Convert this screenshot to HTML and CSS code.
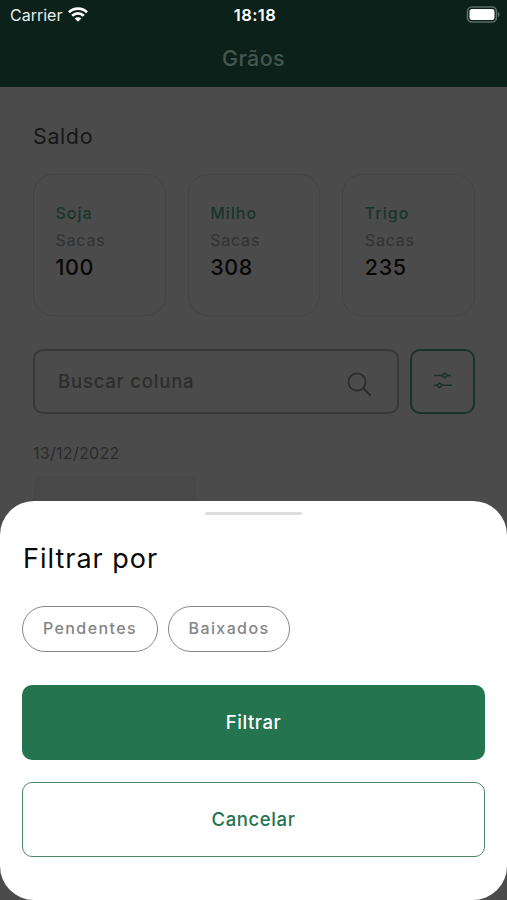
FILE: index.html
```html
<!DOCTYPE html>
<html lang="pt-BR">
<head>
  <meta charset="UTF-8" />
  <title>Grãos</title>
  <meta name="viewport" content="width=device-width, initial-scale=1" />
  <link rel="stylesheet" href="styles.css">
</head>
<body>

  <header class="header">
    <div class="status">
      <div class="carrier">
        <span>Carrier</span>
        <svg width="20" height="15" viewBox="0 0 20 15" fill="none" stroke="#fff" stroke-width="2.7">
          <path d="M1 5.4a12.8 12.8 0 0 1 18 0" />
          <path d="M4.2 8.8a8.2 8.2 0 0 1 11.6 0" />
          <path d="M10 14.8 6.7 11.5a4.7 4.7 0 0 1 6.6 0z" fill="#fff" stroke="none" />
        </svg>
      </div>
      <span class="time">18:18</span>
      <svg class="battery" width="34" height="17" viewBox="0 0 34 17">
        <rect x="1.500" y="1" width="29" height="15" rx="4.5" fill="none" stroke="#5c6d66" stroke-width="1.6" />
        <rect x="3.500" y="3" width="25" height="11" rx="2.8" fill="#fff" />
        <path d="M32 6v5q1.6-.8 1.6-2.5T32 6z" fill="#5c6d66" />
      </svg>
    </div>
    <h1 class="title">Grãos</h1>
  </header>

  <main class="content">
    <h2 class="saldo">Saldo</h2>

    <div class="cards">
      <div class="card">
        <p class="name">Soja</p>
        <p class="unit">Sacas</p>
        <p class="amount">100</p>
      </div>
      <div class="card">
        <p class="name">Milho</p>
        <p class="unit">Sacas</p>
        <p class="amount">308</p>
      </div>
      <div class="card">
        <p class="name">Trigo</p>
        <p class="unit">Sacas</p>
        <p class="amount">235</p>
      </div>
    </div>

    <div class="search-row">
      <div class="search">
        <span>Buscar coluna</span>
        <svg width="25" height="25" viewBox="0 0 25 25" fill="none" stroke="#2b2b2b" stroke-width="1.6">
          <circle cx="10" cy="10" r="8.6" />
          <path d="M16 16l7.5 7.5" stroke-width="1.9" />
        </svg>
      </div>
      <div class="filter">
        <svg width="18" height="17" viewBox="0 0 18 17" fill="none" stroke="#1a3129" stroke-width="1.4">
          <path d="M0 3.5h8.2M13.4 3.5H17M0 13.2h3M8 13.2h10" />
          <path d="M10.8 1l2.5 2.500-2.500 2.500-2.500-2.500zM5.500 10.700l2.500 2.500-2.500 2.500-2.500-2.500z" stroke-linejoin="round" />
        </svg>
      </div>
    </div>

    <p class="date">13/12/2022</p>
    <div class="entry">
      <div class="entry-left"></div>
      <div class="entry-right"></div>
    </div>
  </main>

  <section class="sheet">
    <div class="handle"></div>
    <h2 class="sheet-title">Filtrar por</h2>
    <div class="chips">
      <button class="chip chip-pendentes">Pendentes</button>
      <button class="chip chip-baixados">Baixados</button>
    </div>
    <button class="btn btn-primary">Filtrar</button>
    <button class="btn btn-outline">Cancelar</button>
  </section>

</body>
</html>
```

FILE: styles.css
```css
* {
  box-sizing: border-box;
}
body {
  margin: 0;
  height: 900px;
  overflow: hidden;
  position: relative;
  background: #4b4b4b;
  font-family: Inter, "Liberation Sans", sans-serif;
}
h1, h2, p {
  margin: 0;
  font-weight: 400;
}
button {
  font-family: inherit;
  padding: 0;
}

/* header */
.header {
  height: 87px;
  background: #0b2119;
}
.status {
  height: 30px;
  padding: 0 7px 0 10px;
  display: grid;
  grid-template-columns: 1fr auto 1fr;
  align-items: center;
  color: #fff;
  font-size: 16.5px;
}
.carrier {
  display: flex;
  align-items: center;
  gap: 6px;
  color: #e9edeb;
  font-size: 16px;
}
.carrier svg {
  margin-top: -2px;
}
.time {
  font-weight: 600;
  letter-spacing: 0.4px;
}
.battery {
  justify-self: end;
  margin-top: -1px;
}
.title {
  line-height: 57px;
  text-align: center;
  font-size: 21.5px;
  font-weight: 500;
  letter-spacing: 0.4px;
  color: #46554f;
}

/* balance */
.content {
  padding: 0 32px 0 33px;
}
.saldo {
  padding-top: 35px;
  line-height: 28px;
  font-size: 21.5px;
  letter-spacing: 0.6px;
  color: #171717;
}
.cards {
  margin-top: 24px;
  display: grid;
  grid-template-columns: repeat(3, 1fr);
  gap: 22px;
}
.card {
  height: 142px;
  padding: 25px 0 0 21.5px;
  border: 1.5px solid #444;
  border-radius: 20px;
}
.name, .unit, .amount {
  line-height: 27px;
}
.name {
  font-size: 16px;
  font-weight: 500;
  letter-spacing: 1px;
  color: #17352a;
}
.unit {
  font-size: 16px;
  letter-spacing: 0.8px;
  color: #323232;
}
.amount {
  font-size: 21.5px;
  font-weight: 500;
  letter-spacing: 0.6px;
  color: #080808;
}

/* search */
.search-row {
  margin-top: 33px;
  display: flex;
  gap: 11px;
}
.search {
  flex: 1;
  height: 65px;
  padding: 0 25px 2px 23px;
  display: flex;
  align-items: center;
  justify-content: space-between;
  border: 2px solid #393939;
  border-radius: 10px;
  font-size: 18.5px;
  font-weight: 500;
  letter-spacing: 0.8px;
  color: #2d2d2d;
}
.search svg {
  margin-top: 7px;
}
.filter {
  width: 65px;
  height: 65px;
  padding-bottom: 2px;
  display: flex;
  align-items: center;
  justify-content: center;
  border: 2px solid #1b322a;
  border-radius: 10px;
}
.date {
  margin-top: 29px;
  line-height: 20px;
  font-size: 16px;
  letter-spacing: 0.3px;
  color: #2b2b2b;
}
.entry {
  margin-top: 13px;
  height: 60px;
  display: flex;
}
.entry-left {
  width: 163px;
  background: #484848;
  border-radius: 10px 0 0 0;
}
.entry-right {
  flex: 1;
  border: 1px solid #494949;
  border-left: none;
}

/* bottom sheet */
.sheet {
  position: absolute;
  top: 501px;
  left: 0;
  right: 0;
  height: 399px;
  padding: 11px 22px 0;
  background: #fff;
  border-radius: 34px;
}
.handle {
  width: 97px;
  height: 3px;
  margin: 0 auto;
  border-radius: 2px;
  background: #dedede;
}
.sheet-title {
  margin-top: 25px;
  padding-left: 1px;
  line-height: 37px;
  font-size: 27px;
  letter-spacing: 1px;
  color: #080808;
}
.chips {
  margin-top: 29px;
  display: flex;
  gap: 10px;
}
.chip {
  height: 46px;
  padding-bottom: 3px;
  border: 1.5px solid #858585;
  border-radius: 23px;
  background: #fff;
  color: #858585;
  font-size: 16px;
  font-weight: 500;
  letter-spacing: 1.4px;
}
.chip-pendentes {
  width: 136px;
}
.chip-baixados {
  width: 122px;
}
.btn {
  display: block;
  width: 463px;
  height: 75px;
  padding-bottom: 2px;
  border-radius: 10px;
  font-size: 18.5px;
  font-weight: 500;
  letter-spacing: 0.6px;
}
.btn-primary {
  margin-top: 33px;
  border: none;
  background: #24744f;
  color: #fff;
}
.btn-outline {
  margin-top: 22px;
  border: 1.5px solid #4d8a6c;
  background: #fff;
  color: #24744f;
}
```
